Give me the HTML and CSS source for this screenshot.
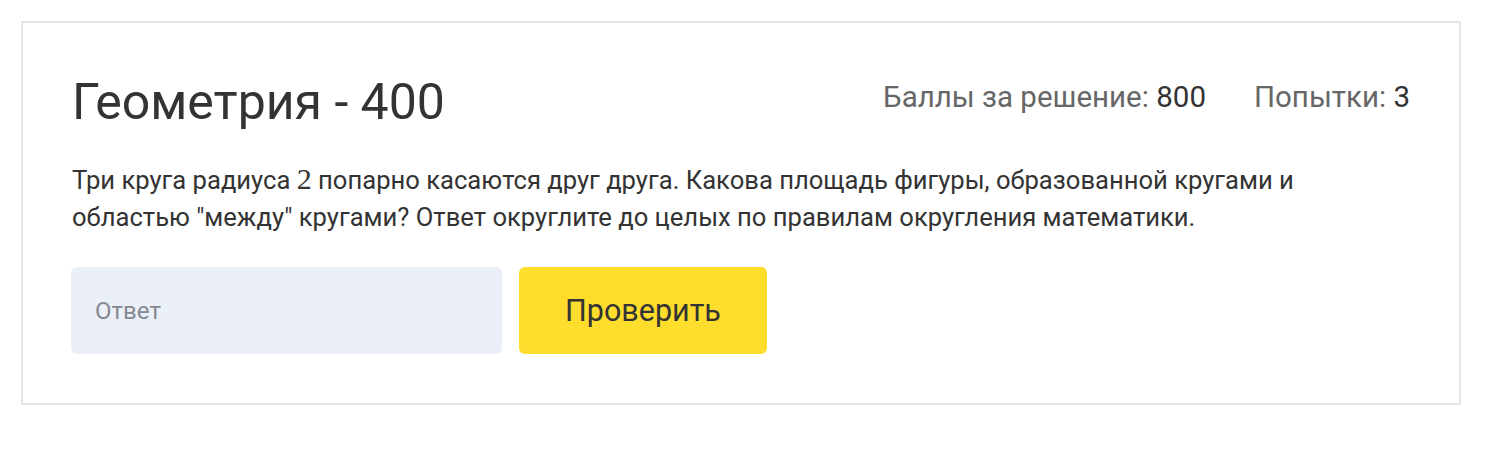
FILE: index.html
```html
<!DOCTYPE html>
<html lang="ru">
<head>
<meta charset="utf-8">
<link rel="stylesheet" href="styles.css">
</head>
<body>
<div class="page">
  <div class="card">
    <div class="head">
      <h1 class="title">Геометрия - 400</h1>
      <div class="meta">
        <span class="meta-item">Баллы за решение: <b>800</b></span>
        <span class="meta-item">Попытки: <b>3</b></span>
      </div>
    </div>
    <p class="task">Три круга радиуса <span class="math">2</span> попарно касаются друг друга. Какова площадь фигуры, образованной кругами и областью "между" кругами? Ответ округлите до целых по правилам округления математики.</p>
    <div class="form">
      <input class="answer" type="text" placeholder="Ответ">
      <button class="check" type="button">Проверить</button>
    </div>
  </div>
</div>
</body>
</html>
```

FILE: styles.css
```css
* { box-sizing: border-box; }
html, body { margin: 0; padding: 0; background: #fff; }
body { font-family: Roboto, "Noto Sans", sans-serif; color: #333; }
.page { padding: 21px 47px 0 21px; }
.card {
  width: 1440px;
  height: 384px;
  border: 2px solid #e6e6e6;
  padding: 54px 49px 0 49px;
}
.head { display: flex; justify-content: space-between; align-items: flex-start; }
.title { margin: 0; font-size: 50px; line-height: 50px; font-weight: 400; color: #333; }
.meta { display: flex; gap: 48px; font-size: 29.5px; line-height: 35px; color: #666; margin-top: 3px; }
.meta b { font-weight: 400; color: #333; }
.task { margin: 35px 0 0 0; font-size: 25.6px; line-height: 37px; color: #333; }
.math { font-family: "Liberation Serif", "DejaVu Serif", serif; font-size: 30px; line-height: 1; }
.form { display: flex; gap: 17px; margin: 31px 0 0 -1px; }
.answer {
  width: 431px; height: 87px; border: 0; border-radius: 6px;
  background: #ebeff7; padding: 0 24px; font-family: Roboto, sans-serif; font-size: 24px; color: #333; outline: none;
}
.answer::placeholder { color: #858992; }
.check {
  width: 248px; height: 87px; border: 0; border-radius: 6px;
  background: #ffdd2d; font-family: Roboto, sans-serif; font-size: 30.5px; color: #333; cursor: pointer;
}
```
